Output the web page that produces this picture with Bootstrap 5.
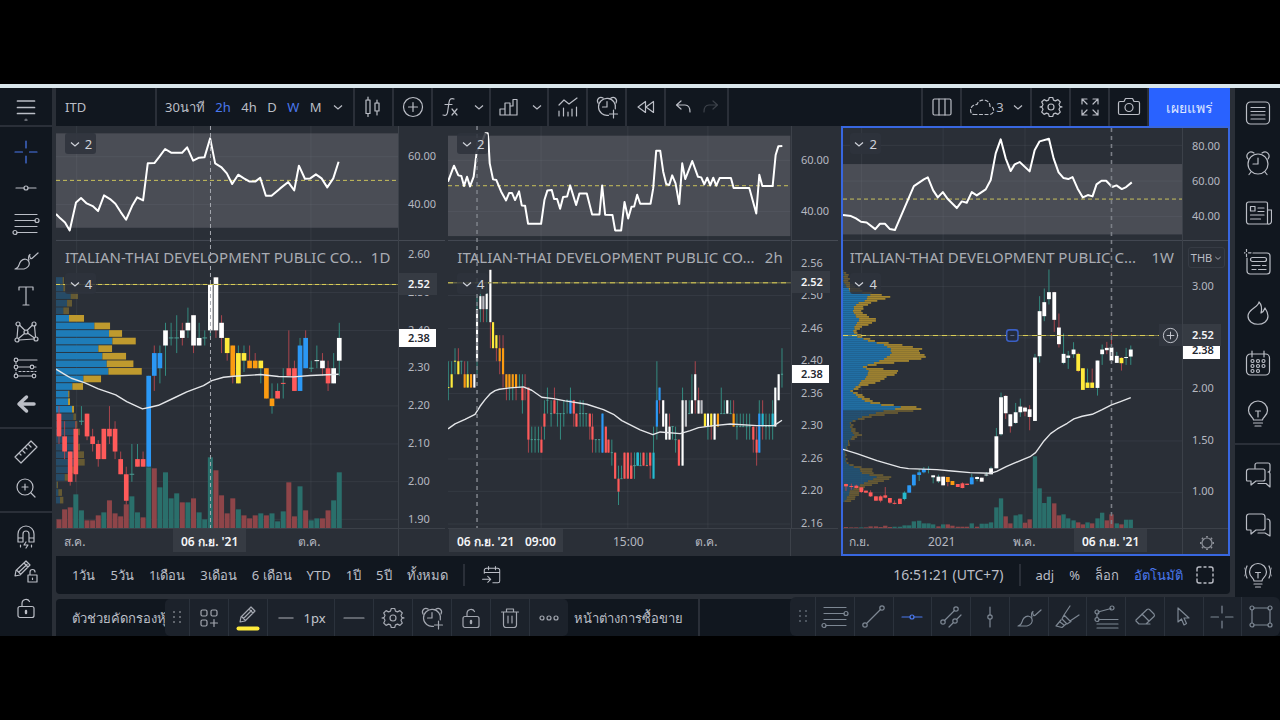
<!DOCTYPE html>
<html lang="th">
<head>
<meta charset="utf-8">
<meta name="viewport" content="width=device-width, initial-scale=1">
<title>ITD – Chart</title>
<link href="https://cdn.jsdelivr.net/npm/bootstrap@5.3.0/dist/css/bootstrap.min.css" rel="stylesheet">
<style>
:root{--panel:#11171f;--gap:#2a2f37;--float:#1c222b;--line:#2a2f38;--ink:#bbbec6;--blue:#4a78ee}
body{background:#000;color:var(--ink);font-family:"Noto Sans","Open Sans",sans-serif;font-size:13px;line-height:20px;padding:84px 0}
svg{display:block}
.ico{width:28px;height:28px;fill:none;stroke:currentColor;stroke-width:1.2;stroke-linecap:round;stroke-linejoin:round;flex:none}
.ico-sm{width:24px;height:24px}
.chev{width:12px;height:12px;fill:none;stroke:currentColor;stroke-width:1.2;flex:none}
.workspace{background:var(--gap);border-top:4px solid #d9e5ea;display:grid;grid-template-columns:52px minmax(0,1fr) 45px;column-gap:4px}
.center-col{padding-right:1px}
.tb{background:none;border:0;color:inherit;padding:0;display:flex;align-items:center;justify-content:center;white-space:nowrap}
.rail{background:var(--panel);height:0;min-height:100%;overflow:hidden}
.rail .tb{width:100%;height:36px;flex:none}
.rail .menu-tb{height:39px;border-bottom:2px solid var(--line);margin-bottom:7px}
.rail hr{margin:5px 0;border:0;border-top:2px solid var(--line);opacity:1;flex:none}
.side-rail .tb{height:50px}
.top-tools{background:var(--panel);height:38px}
.cell{border-right:2px solid var(--line);display:flex;align-items:center;justify-content:center;height:38px}
.w39{width:39px}.w58{width:58px}
.layout-btn{width:41px;border-left:2px solid var(--line)}
.saved-btn{width:70px}
.history{width:63px}
.symbol-btn{width:101px;justify-content:flex-start;padding-left:9px}
.interval{width:198px;padding:0 9px 0 8px;justify-content:space-between}
.on{color:var(--blue)}
.publish{background:#2962ff;color:#dfe6ff;width:81px;height:38px;border-radius:0;border:0;font-size:14px;padding:0;font-weight:500}
.charts{display:grid;grid-template-columns:repeat(3,minmax(0,1fr));gap:3px;height:430px}
.pane{display:grid;grid-template-columns:minmax(0,1fr) 47px;grid-template-rows:minmax(0,1fr) 28px;background:#2a2f37;position:relative}
.pane.active{border:2px solid #3867e0;grid-template-columns:minmax(0,1fr) 46px;grid-template-rows:minmax(0,1fr) 26px}
.pane svg.plot,.pane svg.axis,.pane svg.times{width:100%;height:100%;min-height:0;font-size:11px;fill:#b5b8c0}
.pane svg.times{font-size:12px}
.plot-wrap{position:relative;min-height:0}
.axis-wrap{border-left:1px solid #3c4149;min-height:0;position:relative}
.time-row{grid-column:1/3;border-top:1px solid #3c4149;min-height:0}
.legend-btn{position:absolute;left:9px;height:21px;width:31px;background:rgba(46,51,60,.85);border-radius:3px;font-size:13px;color:#d0d3da;gap:4px}
.top-legend{top:7px}.main-legend{top:147px}
.active .top-legend{top:5px;left:7px}.active .main-legend{top:145px;left:7px}
.pair{position:absolute;left:9px;right:8px;top:119px;font-size:15px;line-height:24px;color:#a9acb3;display:flex;justify-content:space-between;white-space:nowrap}
.active .pair{left:7px;top:117px}
.thb{position:absolute;left:5px;top:119px;width:37px;height:21px;border:1px solid #363b44;border-radius:3px;font-size:11px;gap:2px}
.thb .chev{width:8px;height:8px}
.add-alert{position:absolute;right:0;top:196px;width:23px;height:22px;background:#30353e;color:#d0d3da}
.add-alert .ico{width:21px;height:21px}
.range-bar{background:var(--panel);height:38px;border-radius:0 0 4px 4px;padding:0 11px 0 16px}
.range-bar .ranges{gap:15px}
.clock{font-size:14px}
.vr-line{width:2px;height:22px;background:var(--line)}
.tabs-bar{margin-top:5px;height:37px;background:var(--panel);border-radius:4px 4px 0 0;padding-left:16px;overflow:hidden}
.tab-a{width:93px;overflow:hidden;justify-content:flex-start;height:37px}
.tab-b{width:132px;border-right:2px solid var(--line);justify-content:flex-start;padding-left:6px;height:37px}
.floatbar{background:var(--float);border-radius:5px;color:#a3a7b0}
.floatbar .tb{height:37px;width:39px;border-left:1px solid #2b323c}
.floatbar .grip{width:24px;border:0}
.floatbar .thick{width:67px;gap:7px;color:#c4c7ce}
.floatbar .thick .ico{width:20px}
.draw-bar{position:absolute;right:0;bottom:0;width:490px;color:#7d8793;border-radius:6px}
.draw-bar .tb{height:39px;flex:1 1 0}
.draw-bar .grip{flex:none;width:25px}
</style>
</head>
<body>
<svg width="0" height="0" class="position-absolute" aria-hidden="true">
<defs>
<symbol id="menu" viewBox="0 0 28 28"><path d="M5.500 8h17M5.500 14.500h17M5.500 20.500h17" stroke-width="1.700"/><circle cx="14" cy="27" r="1.600" fill="currentColor" stroke="none" opacity=".5"/></symbol>
<symbol id="cross" viewBox="0 0 28 28"><path d="M14 3v7M14 18v7M3 14h7.500M17.500 14H25" /></symbol>
<symbol id="hline" viewBox="0 0 28 28"><circle cx="14" cy="14" r="2"/><path d="M4 14h8M16 14h8"/></symbol>
<symbol id="vline" viewBox="0 0 28 28"><circle cx="14" cy="14" r="2.200"/><path d="M14 4v7.800M14 16.200V24"/></symbol>
<symbol id="fib" viewBox="0 0 28 28"><path d="M3 4.500h22M3 10.500h20M3 16.500h22M5 22.500h20"/><circle cx="25" cy="10.500" r="2"/><circle cx="3" cy="22.500" r="2"/></symbol>
<symbol id="brush" viewBox="0 0 28 28"><path d="M3 23c5-1 3-5 6-8s7-2 8 1-1 6-5 7H3zM17 14c-1-3-1-4 1-5.500M26 7l-5 4.500c-2 2-3 1.500-3.500-2.500"/></symbol>
<symbol id="text" viewBox="0 0 28 28"><path d="M7 8V5h14v3M14 5v18M11 23h6"/></symbol>
<symbol id="xabcd" viewBox="0 0 28 28"><path d="M5 20 6 8M8 7.500l5 5M15 12.500l5-5M22.500 8l1 11M6.500 20.500l6-5M15.500 15l7 5M7 22l15-1"/><circle cx="6" cy="6" r="2"/><circle cx="22" cy="6" r="2"/><circle cx="14" cy="14" r="2"/><circle cx="5" cy="22" r="2"/><circle cx="24" cy="21" r="2"/></symbol>
<symbol id="forecast" viewBox="0 0 28 28"><path d="M6 6h19M6 13h12M6 22h14"/><path d="M4 8.500v3M4 15.500v4" stroke-dasharray="1 2"/><path d="M7 17.500h17M22 13h4" stroke-dasharray="2 2"/><circle cx="4" cy="6" r="1.800"/><circle cx="4" cy="13" r="1.800"/><circle cx="4" cy="22" r="1.800"/><circle cx="22" cy="22" r="1.800"/><circle cx="20" cy="13" r="1.800"/></symbol>
<symbol id="back" viewBox="0 0 28 28"><path d="M14.500 7 7 14l7.500 7M8 14h14" stroke-width="3.500"/></symbol>
<symbol id="ruler" viewBox="0 0 28 28"><path d="M3 19 19 3l6 6L9 25zM7 15l2 2M10 12l3 3M13 9l2 2M16 6l3 3"/></symbol>
<symbol id="zoomin" viewBox="0 0 28 28"><circle cx="13" cy="13" r="8"/><path d="M19 19l4 4M13 10v6M10 13h6"/></symbol>
<symbol id="magnet" viewBox="0 0 28 28"><path d="M6 20v-8a8 8 0 0 1 16 0v8h-5v-8a3 3 0 0 0-6 0v8zM6 16h5M17 16h5M8.500 23v2M19.500 23v2M14 20l-2 3h4l-2 3"/></symbol>
<symbol id="penlock" viewBox="0 0 28 28"><path d="M3 18l1-5.500L14 3l4 4-10 10zM12 5l4 4M5 12.500l3.500 3.500M7 14l8-7.500M16 17h9v7h-9zM18 17v-3a2.500 2.500 0 0 1 5 0M20.500 20v1.500"/></symbol>
<symbol id="unlock" viewBox="0 0 28 28"><rect x="6" y="12.500" width="16" height="11" rx="2"/><path d="M10 12V9a4 4 0 0 1 7.500-1.500"/><path d="M14 17v2" stroke-width="2.400"/></symbol>
<symbol id="eye" viewBox="0 0 28 28"><path d="M6 13c3-8 13-8 16 0-3 8-13 8-16 0z"/></symbol>
<symbol id="candles" viewBox="0 0 28 28"><path d="M8 4v3M8 20.500v3M17 7v3M17 18v4"/><path d="M6 7h4v13.500H6zM15 10h4v8h-4z"/></symbol>
<symbol id="plus" viewBox="0 0 28 28"><circle cx="14" cy="14" r="9.500"/><path d="M14 9.500v9M9.500 14h9"/></symbol>
<symbol id="fx" viewBox="0 0 28 28"><path d="M6 22c3 .8 4 0 4.500-2.500l1.500-10c.5-3.500 2-4.500 5-3.500M8 11.500h7M15 16l5 6M20 16l-5 6"/></symbol>
<symbol id="bars" viewBox="0 0 28 28"><path d="M5 16h5v6H5zM10 10h5v12h-5zM15 13h3M18 6.500h4V22h-7v-9h3z"/></symbol>
<symbol id="tmpl" viewBox="0 0 28 28"><path d="M5 12l5-5 5 4 8-6M5 18v5M9.500 15v8M14 19v4M18 16v7M22.500 14v9"/></symbol>
<symbol id="alarmadd" viewBox="0 0 28 28"><path d="M15.500 22.300a8.500 8.500 0 1 1 6.800-6.500M14 8.500V14H9.500M5 10C3 6 7 3 10 5M18 5c3-2 7 1 5 5M20.500 17v8M16.500 21h8"/></symbol>
<symbol id="rewind" viewBox="0 0 28 28"><path d="M13.500 8.500v11L6 14zM21.500 8.500v11L14 14z"/></symbol>
<symbol id="undo" viewBox="0 0 28 28"><path d="M8 12h8c4 0 5 3 5 7M12 8l-4.500 4L12 16"/></symbol>
<symbol id="redo" viewBox="0 0 28 28"><path d="M20 12h-8c-4 0-5 3-5 7M16 8l4.500 4L16 16"/></symbol>
<symbol id="layout" viewBox="0 0 28 28"><rect x="5" y="6" width="18" height="16" rx="1.500"/><path d="M11 6v16M17 6v16"/></symbol>
<symbol id="cloud" viewBox="0 0 28 28"><path d="M6 21.500h15c6 0 6-8 1-8 0-8-11-8.500-13-2-8 0-8 10-3 10z" stroke-dasharray="3 2.500"/></symbol>
<symbol id="gear" viewBox="0 0 28 28"><circle cx="14" cy="14" r="3"/><path d="M12.300 4.500h3.400l.8 2.600 2 .8 2.400-1.300 2.400 2.400-1.300 2.400.8 2 2 .5.200.1v0l-2.200.5-.8 2 1.300 2.500-2.400 2.400-2.400-1.300-2 .8-.8 2.600h-3.400l-.8-2.600-2-.8-2.400 1.300-2.400-2.400L6 16.500l-.8-2L3 14l2.200-.6.8-2L4.700 9l2.400-2.400 2.400 1.300 2-.8z"/></symbol>
<symbol id="expand" viewBox="0 0 28 28"><path d="M6 11V6h5M17 6h5v5M22 17v5h-5M11 22H6v-5M6 6l5 5M22 6l-5 5M22 22l-5-5M6 22l5-5"/></symbol>
<symbol id="camera" viewBox="0 0 28 28"><path d="M5 8.500h4l1.500-3h7l1.500 3h4a1.500 1.500 0 0 1 1.500 1.500v10a1.500 1.500 0 0 1-1.500 1.500H5A1.500 1.500 0 0 1 3.500 20V10A1.500 1.500 0 0 1 5 8.500z"/><circle cx="14" cy="14.500" r="4"/></symbol>
<symbol id="chev" viewBox="0 0 12 12"><path d="M2 4.500l4 3.500 4-3.500"/></symbol>
<symbol id="list" viewBox="0 0 28 28"><rect x="2.500" y="3" width="23" height="22" rx="4"/><path d="M7 8.500h14M7 12.500h14M7 16h14M7 20h14"/></symbol>
<symbol id="alarm" viewBox="0 0 28 28"><circle cx="14" cy="15" r="10"/><path d="M14 9v6H9M4 10C1 6 5 1 10 4M24 10c3-4-1-9-6-6M7 23l-2 2.500M21 23l2 2.500"/></symbol>
<symbol id="news" viewBox="0 0 28 28"><path d="M23.500 25H5a2.500 2.500 0 0 1-2.500-2.500V5A2 2 0 0 1 4.500 3H22a1.500 1.500 0 0 1 1.500 1.500V25c2.500.5 4-1 4-3V11h-4M14 9h6M14 12.500h6M6.500 16h13.500M6.500 20h10"/><rect x="6.500" y="7.500" width="4.500" height="4.500"/></symbol>
<symbol id="datawin" viewBox="0 0 28 28"><path d="M9 4h14a3 3 0 0 1 3 3v15a3 3 0 0 1-3 3H6a3 3 0 0 1-3-3V9M2.500 0v2.500M2.500 5v2.500M0 3.800h1M4.500 3.800H7M8 16.500h8M18.500 16.500h3.500M8 20.500h4M14.500 20.500h7.500"/><rect x="6.500" y="8.500" width="16" height="4" rx="2"/></symbol>
<symbol id="flame" viewBox="0 0 28 28"><path d="M15 3c0 5-11 7-11 14 0 11 20 11 20 0 0-3-1-5-3-8-1 3-2 4-4 5 1-4 1-8-2-11z"/></symbol>
<symbol id="cal" viewBox="0 0 28 28"><rect x="2.500" y="5" width="23" height="21" rx="4"/><path d="M8 2v6M20 2v6"/><circle cx="8.500" cy="12" r="1.500"/><circle cx="14" cy="12" r="1.500"/><circle cx="19.500" cy="12" r="1.500"/><circle cx="8.500" cy="17" r="1.500"/><circle cx="14" cy="17" r="1.500"/><circle cx="19.500" cy="17" r="1.500"/><circle cx="8.500" cy="22" r="1.500"/><circle cx="14" cy="22" r="1.500"/></symbol>
<symbol id="bulb" viewBox="0 0 28 28"><path d="M9.500 21c0-3-5-4-5-9.500a9.500 9.500 0 0 1 19 0c0 5.500-5 6.500-5 9.500zM11.500 12h5M14 12v6M9.500 24h9M11 27h6"/></symbol>
<symbol id="chats" viewBox="0 0 28 28"><path d="M11 7V4a2 2 0 0 1 2-2h11a2 2 0 0 1 2 2v5a2 2 0 0 1-2 2M5 8h14a2 2 0 0 1 2 2v8a2 2 0 0 1-2 2h-7l-5 4v-4H3.500a1 1 0 0 1-1-1v-8.500A2.500 2.500 0 0 1 5 8zM24 11a2 2 0 0 1 2 2v13l-4-3.500h-8"/></symbol>
<symbol id="chat" viewBox="0 0 28 28"><path d="M5 3h13a3 3 0 0 1 3 3v11a2 2 0 0 1-2 2h-7l-5 4v-4H3.500a1 1 0 0 1-1-1V5.500A2.500 2.500 0 0 1 5 3zM23 8a3 3 0 0 1 3 3v14l-5-3h-7"/></symbol>
<symbol id="bulbwave" viewBox="0 0 28 28"><path d="M10 20c0-3-4.500-4-4.500-9a8.500 8.500 0 0 1 17 0c0 5-4.500 6-4.500 9zM11.500 11.500h5M14 11.500v5.500M10 23h8M11.500 26h5M3 5c-2 4-2 8 0 12M0 7c-1 3-1 5 0 8M25 5c2 4 2 8 0 12M28 7c1 3 1 5 0 8" /></symbol>
<symbol id="goto" viewBox="0 0 28 28"><path d="M5 12V8.500A2.500 2.500 0 0 1 7.500 6h13A2.500 2.500 0 0 1 23 8.500V21a2 2 0 0 1-2 2h-6M5 11h18M10 4v4M18 4v4M3 19h9M9 15.500l3.500 3.500L9 22.500"/></symbol>
<symbol id="full" viewBox="0 0 28 28"><path d="M6 10V8a2 2 0 0 1 2-2h2M18 6h2a2 2 0 0 1 2 2v2M22 18v2a2 2 0 0 1-2 2h-2M10 22H8a2 2 0 0 1-2-2v-2M13 6h2M13 22h2M6 13v2M22 13v2" stroke-width="1.400"/></symbol>
<symbol id="grip" viewBox="0 0 28 28"><path d="M10 7h2v2h-2zM16 7h2v2h-2zM10 12h2v2h-2zM16 12h2v2h-2zM10 17h2v2h-2zM16 17h2v2h-2z" fill="currentColor" stroke="none" opacity=".5"/></symbol>
<symbol id="widgets" viewBox="0 0 28 28"><rect x="6" y="6" width="6" height="6" rx="1.500"/><rect x="16" y="6" width="6" height="6" rx="1.500"/><rect x="6" y="16" width="6" height="6" rx="1.500"/><path d="M19 15.500v7M15.500 19h7"/></symbol>
<symbol id="pencil" viewBox="0 0 28 28"><path d="M6 18l1-5L17 3l4 4L11 17zM15 5l4 4M8 13l3 3M9.500 14.500l8-8"/><path d="M4.500 24.500h19" stroke="#ffeb3b" stroke-width="4"/></symbol>
<symbol id="dash" viewBox="0 0 28 28"><path d="M4 14h20"/></symbol>
<symbol id="trash" viewBox="0 0 28 28"><path d="M5.500 8h17M10.500 8V5h7v3M7.500 8v13a2.500 2.500 0 0 0 2.500 2.500h8a2.500 2.500 0 0 0 2.500-2.500V8M12 12v7M16 12v7"/></symbol>
<symbol id="dots" viewBox="0 0 28 28"><circle cx="7" cy="14" r="2"/><circle cx="14" cy="14" r="2"/><circle cx="21" cy="14" r="2"/></symbol>
<symbol id="trend" viewBox="0 0 28 28"><circle cx="5" cy="22" r="2.200"/><circle cx="22" cy="5" r="2.200"/><path d="M7 20 20.500 6.500"/></symbol>
<symbol id="channel" viewBox="0 0 28 28"><circle cx="6" cy="19" r="2.200"/><circle cx="19" cy="6" r="2.200"/><circle cx="18" cy="18" r="2.200"/><path d="M7.500 17.500l10-10M20 16l4-4M16 20l-4 4"/></symbol>
<symbol id="marker" viewBox="0 0 28 28"><path d="M17 3l-6 9 6 6 9-6M11 12l-2 4 5 5 4-2.500M8 17l-5 6 6 1.500 4-3.500M7 19l4 3"/></symbol>
<symbol id="fan" viewBox="0 0 28 28"><path d="M6 9l13-3.500M5 11v4M7 16.500h19M5 21h21M5 25h21"/><circle cx="5" cy="9" r="2"/><circle cx="5" cy="16.500" r="2"/><circle cx="20" cy="5" r="2"/></symbol>
<symbol id="eraser" viewBox="0 0 28 28"><path d="M5 17 16 6.500a2 2 0 0 1 2.500 0L23 11a2 2 0 0 1 0 2.500L15 21H8l-3-3zM11 11l7 7M8 21h11"/></symbol>
<symbol id="cursor" viewBox="0 0 28 28"><path d="M8 5v14l3.500-3 2.500 6 2.500-1.500-2.500-5.500H19z"/></symbol>
<symbol id="rect" viewBox="0 0 28 28"><circle cx="5" cy="5" r="2"/><circle cx="23" cy="5" r="2"/><circle cx="5" cy="22" r="2"/><circle cx="23" cy="22" r="2"/><path d="M7 5h14M7 22h14M5 7v13M23 7v13"/></symbol>
<symbol id="sun" viewBox="0 0 28 28"><circle cx="14" cy="14" r="5"/><path d="M14 7v1.500M14 19.500V21M7 14h1.500M19.500 14H21M9 9l1 1M18 18l1 1M19 9l-1 1M10 18l-1 1" stroke-width="1.800"/></symbol>
</defs>
</svg>

<main class="workspace position-relative">
  <nav class="rail d-flex flex-column" aria-label="Drawing tools" data-icons="menu cross hline fib brush text xabcd forecast back - ruler zoomin - magnet penlock unlock eye"></nav>

  <div class="center-col d-flex flex-column">
    <header class="top-tools d-flex">
      <button class="tb cell symbol-btn">ITD</button>
      <div class="cell interval">
        <button class="tb">30นาที</button><button class="tb on">2h</button><button class="tb">4h</button><button class="tb">D</button><button class="tb on">W</button><button class="tb">M</button>
        <button class="tb" aria-label="More intervals"><svg class="chev"><use href="#chev"/></svg></button>
      </div>
      <button class="tb cell w39" aria-label="Candles"><svg class="ico"><use href="#candles"/></svg></button>
      <button class="tb cell w39" aria-label="Compare"><svg class="ico"><use href="#plus"/></svg></button>
      <button class="tb cell w58 gap-2" aria-label="Indicators"><svg class="ico"><use href="#fx"/></svg><svg class="chev"><use href="#chev"/></svg></button>
      <button class="tb cell w58 gap-2" aria-label="Financials"><svg class="ico"><use href="#bars"/></svg><svg class="chev"><use href="#chev"/></svg></button>
      <button class="tb cell w39" aria-label="Templates"><svg class="ico"><use href="#tmpl"/></svg></button>
      <button class="tb cell w39" aria-label="Alert"><svg class="ico"><use href="#alarmadd"/></svg></button>
      <button class="tb cell w39" aria-label="Replay"><svg class="ico"><use href="#rewind"/></svg></button>
      <div class="cell history"><button class="tb" aria-label="Undo"><svg class="ico"><use href="#undo"/></svg></button><button class="tb opacity-25" aria-label="Redo"><svg class="ico"><use href="#redo"/></svg></button></div>
      <div class="d-flex ms-auto">
        <button class="tb cell layout-btn" aria-label="Layout"><svg class="ico"><use href="#layout"/></svg></button>
        <button class="tb cell saved-btn" aria-label="Saved layouts"><svg class="ico"><use href="#cloud"/></svg><span class="me-2">3</span><svg class="chev"><use href="#chev"/></svg></button>
        <button class="tb cell w39" aria-label="Settings"><svg class="ico"><use href="#gear"/></svg></button>
        <button class="tb cell w39" aria-label="Fullscreen"><svg class="ico"><use href="#expand"/></svg></button>
        <button class="tb cell w39" aria-label="Snapshot"><svg class="ico"><use href="#camera"/></svg></button>
        <button class="btn publish">เผยแพร่</button>
      </div>
    </header>

    <section class="charts">
      <article class="pane" id="c1">
        <div class="plot-wrap"><svg class="plot" viewBox="168 378 1026 1206" preserveAspectRatio="none"></svg>
          <button class="tb legend-btn top-legend"><svg class="chev"><use href="#chev"/></svg>2</button>
          <div class="pair"><span>ITALIAN-THAI DEVELOPMENT PUBLIC CO...</span><span>1D</span></div>
          <button class="tb legend-btn main-legend"><svg class="chev"><use href="#chev"/></svg>4</button></div>
        <div class="axis-wrap"><svg class="axis"></svg></div>
        <div class="time-row"><svg class="times"></svg></div>
      </article>
      <article class="pane" id="c2">
        <div class="plot-wrap"><svg class="plot" viewBox="1344 378 1026 1206" preserveAspectRatio="none"></svg>
          <button class="tb legend-btn top-legend"><svg class="chev"><use href="#chev"/></svg>2</button>
          <div class="pair"><span>ITALIAN-THAI DEVELOPMENT PUBLIC CO...</span><span>2h</span></div>
          <button class="tb legend-btn main-legend"><svg class="chev"><use href="#chev"/></svg>4</button></div>
        <div class="axis-wrap"><svg class="axis"></svg></div>
        <div class="time-row"><svg class="times"></svg></div>
      </article>
      <article class="pane active" id="c3">
        <div class="plot-wrap"><svg class="plot" viewBox="2526 384 1020 1200" preserveAspectRatio="none"></svg>
          <button class="tb legend-btn top-legend"><svg class="chev"><use href="#chev"/></svg>2</button>
          <div class="pair"><span>ITALIAN-THAI DEVELOPMENT PUBLIC C...</span><span>1W</span></div>
          <button class="tb legend-btn main-legend"><svg class="chev"><use href="#chev"/></svg>4</button>
          <button class="tb add-alert" aria-label="Add alert at price"><svg class="ico"><use href="#plus"/></svg></button></div>
        <div class="axis-wrap"><svg class="axis"></svg><button class="tb thb">THB<svg class="chev"><use href="#chev"/></svg></button></div>
        <div class="time-row"><svg class="times"></svg></div>
      </article>
    </section>

    <section class="range-bar d-flex align-items-center">
      <div class="ranges d-flex align-items-center">
        <button class="tb">1วัน</button><button class="tb">5วัน</button><button class="tb">1เดือน</button><button class="tb">3เดือน</button><button class="tb">6 เดือน</button><button class="tb">YTD</button><button class="tb">1ปี</button><button class="tb">5ปี</button><button class="tb">ทั้งหมด</button>
        <span class="vr-line"></span>
        <button class="tb" aria-label="Go to date"><svg class="ico ico-sm"><use href="#goto"/></svg></button>
      </div>
      <div class="ranges d-flex align-items-center ms-auto">
        <button class="tb clock">16:51:21 (UTC+7)</button><span class="vr-line"></span>
        <button class="tb">adj</button><button class="tb">%</button><button class="tb">ล็อก</button><button class="tb on">อัตโนมัติ</button>
      </div>
      <button class="tb ms-2" aria-label="Maximize"><svg class="ico"><use href="#full"/></svg></button>
    </section>

    <section class="tabs-bar d-flex">
      <button class="tb tab-a">ตัวช่วยคัดกรองหุ้น</button>
      <div class="floatbar d-flex">
        <button class="tb grip" aria-label="Move"><svg class="ico"><use href="#grip"/></svg></button>
        <button class="tb" aria-label="Templates"><svg class="ico"><use href="#widgets"/></svg></button>
        <button class="tb" aria-label="Line color"><svg class="ico"><use href="#pencil"/></svg></button>
        <button class="tb thick"><svg class="ico"><use href="#dash"/></svg>1px</button>
        <button class="tb" aria-label="Line style"><svg class="ico"><use href="#dash"/></svg></button>
        <button class="tb" aria-label="Settings"><svg class="ico"><use href="#gear"/></svg></button>
        <button class="tb" aria-label="Add alert"><svg class="ico"><use href="#alarmadd"/></svg></button>
        <button class="tb" aria-label="Lock"><svg class="ico"><use href="#unlock"/></svg></button>
        <button class="tb" aria-label="Remove"><svg class="ico"><use href="#trash"/></svg></button>
        <button class="tb" aria-label="More"><svg class="ico"><use href="#dots"/></svg></button>
      </div>
      <button class="tb tab-b">หน้าต่างการซื้อขาย</button>
    </section>
  </div>

  <nav class="rail side-rail d-flex flex-column" aria-label="Widgets" data-icons="list alarm news datawin flame cal bulb - chats chat bulbwave"></nav>

  <div class="floatbar draw-bar d-flex" role="toolbar" aria-label="Favorite drawing tools" data-icons="grip fib trend hline channel vline brush marker fan eraser cursor cross rect"></div>
</main>

<script src="https://cdn.jsdelivr.net/npm/bootstrap@5.3.0/dist/js/bootstrap.bundle.min.js"></script>
<script>
// Toolbars built from their icon lists; "-" is a separator.
document.querySelectorAll('[data-icons]').forEach(bar => {
  bar.innerHTML = bar.dataset.icons.split(' ').map(n => {
    if (n === '-') return '<hr>';
    const on = (bar.classList.contains('draw-bar') ? 'hline' : bar.classList.contains('side-rail') ? '' : 'cross') === n;
    return `<button class="tb ${on ? 'on' : ''} ${n === 'grip' ? 'grip' : ''} ${n === 'menu' ? 'menu-tb' : ''}" aria-label="${n}"><svg class="ico overflow-visible"><use href="#${n}"/></svg></button>`;
  }).join('');
});

// Plot units are thirds of a CSS pixel.
const COL = {R:'#ff5a5a', B:'#2b98f5', W:'#fff', Y:'#ffea3b', O:'#fb9b11', C:'#26b9cf', G:'#2f7a74', A:'#b9bcc2'};
const WICK = {g:'#348a7f', r:'#a9454d'};
const rect = (x, y, w, h, f, o = 1) => `<rect x="${x}" y="${y}" width="${w}" height="${h}" fill="${f}" opacity="${o}"/>`;
const seg = (x1, y1, x2, y2, s, w = 1, d = '', o = 1) => `<path d="M${x1} ${y1}L${x2} ${y2}" stroke="${s}" stroke-width="${w}" stroke-dasharray="${d}" opacity="${o}" fill="none" vector-effect="non-scaling-stroke"/>`;
const line = (pts, dx, dy, w) => `<polyline points="${pts.trim().split(/\s+/).map(p => { const [a, b] = p.split(','); return (+a + dx) + ',' + (+b + dy); }).join(' ')}" fill="none" stroke="${w < 2 ? '#e4e6e9' : '#fff'}" stroke-width="${w}" stroke-linejoin="round" vector-effect="non-scaling-stroke"/>`;
function candle(x, h, t, b, l, c, wk, w) {
  const flat = b - t < 3;
  return rect(x - 1.5, h, 3, Math.max(l - h, 0), WICK[wk]) + rect(x - w / 2, flat ? t - 1.5 : t, w, flat ? 3 : b - t, flat && c === 'G' ? '#4d9c93' : COL[c]);
}
function frame(o) {
  let s = rect(o.x0, o.band[0], o.x1 - o.x0, o.band[1] - o.band[0], '#4a4d55');
  o.gv.forEach(x => s += seg(x, 378, x, 1584, '#8a909b', 1, '', .11));
  o.gh.forEach(y => s += seg(o.x0, y, o.x1, y, '#8a909b', 1, '', .11));
  s += seg(o.x0, 721, o.x1, 721, '#454a53');
  s += seg(o.x0, o.mid, o.x1, o.mid, '#c9c15c', 1, '4 3');
  return s;
}
const put = (id, s) => document.querySelector('#' + id + ' .plot').innerHTML = s;

// ---- Daily ----
{
  let s = frame({x0:168, x1:1194, band:[400,683], gv:[230,580,932], gh:[470,613,877,991,1104,1217,1331,1444,1557], mid:541});
  const prof = '38,42 40,47 62,84 51,66 40,57 57,102 133,180 177,216 187,257 145,186 157,228 170,250 175,275 100,153 67,99 55,58 54,60 66,72 70,78 76,82 80,90 74,85 78,90 82,102 82,104 58,80 44,56 20,24 25,36 30,40'.split(' ');
  prof.forEach((p, i) => { const [a, b] = p.split(',').map(Number), y = 831 + i * 22.7, o = i < 5 || i > 17 ? .4 : 1;
    s += rect(168, y, a - 18, 20, i < 5 || i > 17 ? '#2176ae' : '#1e7cb8', o) + rect(150 + a, y, b - a, 20, '#bf9a2e', o); });
  const vol = '9r 19r 21r 34g 18g 8r 8r 13r 16g 28r 15r 12r 24r 32g 16g 11r 61g 60r 41g 56g 30g 35g 26r 26g 30r 16g 9g 71g 58r 33r 15r 30r 19g 13r 10r 13r 15g 13r 15g 7g 17g 46r 12r 42g 18r 8g 10g 10r 18r 28g 56g'.split(' ');
  const X = i => 177 + i * 16.8;
  vol.forEach((v, i) => { const h = parseInt(v) * 3; s += rect(X(i) - 7.5, 1584 - h, 15, h, v.endsWith('g') ? '#2a6f6b' : '#8e4549'); });
  const c = `220 218 212 210 R r,216 212 208 206 R r,208 208 200 199 R r,216 214 202 200 R r,220 216 216 215 G g,218 218 212 211 R r,214 212 210 208 R r,211 210 206 204 R r,214 214 206 206 R r,220 214 212 210 R r,216 214 208 206 R r,208 206 202 202 R r,204 202 195 194 R r,210 202 202 200 G g,210 206 204 204 R g,208 206 204 204 R r,228 228 204 204 B g,236 234 228 224 B r,236 234 230 226 B g,242 240 236 228 W g,242 238 238 236 G g,244 238 238 234 G g,242 240 238 236 W r,246 242 240 238 W g,244 244 236 234 W r,242 238 236 236 W g,240 238 238 236 G g,252 252 240 238 W g,254 254 240 238 W r,244 242 238 234 W r,238 238 234 232 Y r,236 236 228 226 O r,236 234 226 226 Y g,236 234 232 229 Y g,236 232 230 230 O r,234 232 230 230 O r,232 232 230 226 Y g,230 230 222 222 O r,226 222 220 218 O g,226 224 222 222 R g,230 226 226 222 R g,240 230 228 228 R r,232 230 224 224 R r,238 236 224 224 B g,240 238 230 230 B r,232 230 230 229 G g,236 232 232 230 W g,234 232 230 228 W r,232 230 226 224 R r,234 230 226 226 W g,242 238 232 228 W g`.split(',');
  const Y = p => 877 + (250 - p) * 11.35;
  c.forEach((k, i) => { const [h, t, b, l, col, w] = k.trim().split(' '); s += candle(X(i), Y(h), Y(t), Y(b), Y(l), col, w, 14); });
  s += line('18,387 45,403 64,414 105,428 145,446 180,458 197,464 230,484 277,506 300,501 325,495 370,474 410,455 460,436 485,421 520,411 550,408 630,403 685,409 730,410 780,406 865,402', 150, 720, 1.4);
  s += seg(168, 853, 1194, 853, '#7f7c4d') + seg(168, 853, 1194, 853, '#dccf58', 1, '4 3');
  s += line('168,402 180,414 195,427 209,451 228,367 243,354 260,370 278,378 294,393 312,346 330,357 346,371 362,396 378,419 396,378 411,352 429,361 443,250 463,249 478,230 495,207 513,218 546,218 561,202 579,242 597,233 613,232 630,175 645,250 663,261 680,280 696,312 714,284 730,294 747,304 766,304 780,293 797,347 814,347 840,325 864,306 882,331 896,257 914,296 930,295 947,283 964,295 981,322 999,295 1015,245', 0, 240, 2);
  s += seg(631, 378, 631, 1584, '#a6a9b0', 1, '4 3');
  put('c1', s);
}
// ---- Two hours ----
{
  let s = frame({x0:1344, x1:2370, band:[407,708], gv:[1623,1883,2123], gh:[481,634,886,985,1083,1180,1277,1376,1473,1571], mid:557});
  const a = `25 363 442 442 480 Y g,35 363 402 442 442 Y g,45 324 363 363 402 Y g,55 324 363 402 402 Y r,64 363 363 363 402 G g,74 363 402 442 442 O r,83 363 402 442 442 Y g,93 402 402 442 442 O r,103 402 402 442 442 W r,111 168 207 363 402 W g,121 150 168 207 246 W g,130 168 168 207 246 A r,140 130 160 207 246 W g,151 89 89 246 324 W r,159 246 246 324 324 Y r,169 285 285 324 363 Y r,179 285 324 363 402 O r,189 285 324 402 442 O r,199 402 402 442 480 O r,208 402 402 442 480 O g,218 402 402 442 480 O g,228 402 402 442 480 O r,238 402 442 442 442 G g,247 402 442 480 520 R g,255 402 442 442 480 R r,265 442 442 598 637 R r,275 559 598 598 637 G g,285 559 598 598 637 G g,295 559 598 598 637 G g,304 559 598 637 637 R r,313 480 520 559 598 R g,322 442 480 480 520 G g,333 480 520 520 559 G g,343 442 480 520 520 R r,352 480 520 520 559 G g,361 520 520 520 598 G g,371 480 520 520 559 G g,381 480 480 480 520 G g,391 442 480 520 520 B g,401 480 480 520 559 R r,409 520 520 559 559 R r,420 480 520 520 559 G g,429 480 520 520 559 G g,438 520 520 520 559 G g,449 520 520 559 598 R r,457 520 559 598 637 R r,467 598 598 598 637 G g,477 598 598 598 637 G g,487 520 520 637 637 B g,497 559 559 637 637 R r,505 598 598 637 637 R r,515 598 637 637 676 G g,525 637 637 715 715 R r,535 676 715 754 794 R g,544 676 715 715 715 G g,553 637 637 715 715 R r,563 637 637 715 715 R r,573 637 676 715 715 R r,583 637 676 676 715 G g,593 637 637 676 676 C g`;
  const b = `3 637 676 715 715 R r,13 637 676 676 715 G g,22 637 637 676 676 C g,31 637 676 676 676 G g,40 637 637 676 676 R r,50 637 676 676 676 R g,60 637 637 676 715 R r,70 559 637 715 715 C g,80 363 480 559 598 B g,88 442 442 480 520 B r,99 480 480 559 559 W r,108 520 520 598 598 W g,118 520 559 598 598 W r,127 559 559 559 598 G g,136 559 598 598 637 G g,146 598 598 676 676 R r,157 442 480 676 676 W g,167 480 480 559 559 A r,177 480 520 520 520 G g,185 402 480 520 520 W g,195 363 402 480 520 W r,205 442 480 520 520 W r,214 480 480 520 520 A r,224 520 520 559 559 Y r,233 520 520 559 598 W g,243 520 520 559 598 Y r,253 520 520 598 598 W g,263 520 520 559 559 O g,273 442 520 520 520 G g,282 480 520 520 520 G g,291 480 480 520 520 W g,301 480 520 520 520 G g,310 480 520 559 559 O r,320 520 559 559 598 G g,330 520 559 559 559 G g,339 520 559 559 559 G g,349 520 559 559 598 G g,358 520 559 559 598 G g,369 559 559 598 637 R r,379 559 598 637 676 R r,387 480 520 637 637 B g,397 480 520 559 598 C r,407 520 559 559 598 G g,417 520 559 559 598 G g,427 480 520 559 598 C g,435 442 442 559 559 W g,445 402 402 480 480 W g,455 324 402 402 442 G g`;
  [[a, 1320], [b, 1890]].forEach(([d, dx]) => d.split(',').forEach(k => {
    const [x, h, t, bo, l, col, w] = k.split(' ').map((v, i) => i < 5 ? +v : v);
    s += candle(x + dx, h + 720, t + 720, bo + 720, l + 720, col, w, 6.5); }));
  s += line('24,566 45,551 75,537 105,522 120,498 135,478 150,461 165,451 178,447 210,443 250,440 275,450 305,471 340,475 375,482 440,492 490,508 520,522 545,541 600,569 638,583 660,575 720,580 750,571 775,562 820,556 870,551 950,556 1000,556 1010,550 1025,540', 1320, 720, 1.4);
  s += seg(1344, 848, 2370, 848, '#7f7c4d') + seg(1344, 848, 2370, 848, '#dccf58', 1, '5 4');
  s += line('84,305 102,257 115,286 124,288 132,318 141,290 150,319 161,290 170,215 176,205 184,190 196,160 203,160 205,180 209,250 219,298 229,300 243,334 258,361 267,339 276,339 285,360 297,334 305,376 315,377 324,431 363,431 373,360 382,331 395,330 402,357 411,357 420,386 429,351 441,349 450,316 468,375 478,340 500,340 516,403 538,403 546,316 555,404 577,405 585,451 603,451 613,366 624,415 634,380 642,379 651,344 660,371 691,371 699,325 708,212 720,212 729,275 738,312 747,315 756,286 766,310 777,372 786,250 795,297 816,243 833,290 843,292 852,313 861,293 870,316 879,293 888,317 898,294 932,294 940,324 987,324 1008,400 1017,284 1026,318 1057,318 1066,225 1074,199 1086,198', 1260, 240, 2);
  s += seg(1431, 378, 1431, 1584, '#7b7f87', 1.6, '4 4');
  put('c2', s);
}
// ---- Weekly ----
{
  let s = frame({x0:2526, x1:3546, band:[492,703], gv:[2582,2827,3073], gh:[436,543,649,859,1013,1168,1322,1477], mid:597});
  const keys = '90,20,24 110,20,36 130,22,40 150,40,80 160,100,120 168,92,162 180,85,125 188,58,95 200,50,78 215,50,76 225,55,90 238,70,126 250,55,95 262,52,68 275,50,60 288,62,78 300,95,118 310,135,180 322,160,255 335,165,248 350,148,272 362,125,210 372,90,115 380,75,85 388,98,190 400,90,175 410,88,145 422,72,132 435,60,78 450,42,52 465,58,78 478,80,105 490,110,142 499,203,253 508,150,250 520,100,150 530,70,95 545,38,42 560,40,50 583,50,72 600,35,40 615,30,34 640,22,24 670,30,36 685,70,110 697,75,110 708,120,165 720,95,145 735,60,90 750,40,70 765,32,60 785,22,42'.split(' ').map(k => k.split(',').map(Number));
  for (let y = 90, n = 0; y < 785; y += 6, n++) {
    let i = keys.findIndex(k => k[0] > y); const p = keys[i - 1], q = keys[i], f = (y - p[0]) / (q[0] - p[0]);
    const j = (n * 7 % 5 - 2) * 2, a = Math.max(1, p[1] + (q[1] - p[1]) * f - 18 + j / 2), b = Math.max(a, p[2] + (q[2] - p[2]) * f - 18 + j);
    const dim = y < 140 || y > 504, o = dim ? .45 : 1;
    s += rect(2526, y + 720, a, 6, '#1f567f', o) + rect(2526, y + 720, a, 3.6, '#2279b3', o) + rect(2526 + a, y + 720, b - a, 4.4, '#bd982f', dim ? .5 : 1);
  }
  const va = '27 860r,43 861r,58 861r,73 861g,87 861r,101 858r,117 858r,131 860r,145 856r,159 860r,173 859g,189 859g,203 855g,217 855g,231 843g,247 841g,261 849g,275 849g,289 852g,305 858r,319 852g,333 852r,347 856r,363 859r,377 859r,391 859r,405 849g,421 859r,435 850g,449 850g,463 846g,479 801g,493 774g,507 828r,521 849r,537 825g,551 822g,565 847r,579 837r,595 648g';
  const vb = '27 744g,41 788g,55 769g,71 789r,85 825r,99 822g,113 834g,129 840g,143 846r,157 852r,171 846g,185 849r,201 834g,215 817g,229 840r,243 822r,259 849g,273 852r,287 838g,301 838g';
  [[va, 2508], [vb, 3090]].forEach(([d, dx]) => d.split(',').forEach(k => { const [x, v] = k.split(' '), y = parseInt(v); s += rect(+x + dx - 6.5, y + 720, 13, 864 - y, v.endsWith('g') ? '#2a6f6b' : '#8e4549'); }));
  const a = `27 730 731 738 752 R r,43 730 737 740 748 R r,58 733 736 743 745 R r,73 741 741 755 758 R r,87 751 751 757 757 R r,101 750 756 768 770 R r,117 768 768 781 781 R r,131 765 768 781 786 R r,145 740 765 772 774 R r,159 773 773 787 790 R r,173 780 789 791 792 R r,189 775 775 791 791 R r,203 753 757 776 780 C g,217 735 735 757 757 B g,231 703 703 735 738 B g,247 686 696 704 722 B g,261 680 686 696 699 B g,275 678 687 689 699 B g,289 705 705 711 729 W g,305 703 709 723 728 W g,319 709 709 735 735 W r,333 710 710 725 738 O r,347 722 722 734 734 O r,363 731 731 740 740 R r,377 726 729 743 744 R r,391 730 730 734 734 R r,405 700 711 732 732 B g,421 708 710 716 723 W g,435 712 712 724 724 W r,449 695 704 706 708 W g,463 679 684 702 702 W g,479 563 588 684 684 W g,493 457 471 582 586 W g,507 465 467 519 536 W r,521 522 522 558 577 W r,537 488 516 548 551 W g,551 475 499 516 530 W g,565 499 502 514 528 W r,579 495 507 530 570 W r,595 341 352 542 542 W g`;
  const b = `27 168 213 348 367 W g,41 145 186 228 243 W g,55 88 156 177 193 W g,71 155 156 239 275 W r,85 220 262 312 322 W r,99 280 341 368 372 W g,113 332 346 353 386 W g,129 306 328 342 353 W g,143 337 341 392 396 Y r,157 384 384 449 449 Y r,171 385 427 443 443 Y g,185 385 427 443 443 Y r,201 361 361 443 466 W g,215 313 328 342 374 W g,229 305 323 330 342 W r,243 280 322 361 366 W r,259 335 347 368 368 W g,273 351 353 369 391 Y r,287 323 352 354 374 W g,301 316 328 349 374 W g`;
  [[a, 2508], [b, 3090]].forEach(([d, dx]) => d.split(',').forEach(k => {
    const [x, h, t, bo, l, col, w] = k.split(' ').map((v, i) => i < 5 ? +v : v);
    s += candle(x + dx, h + 720, t + 720, bo + 720, l + 720, col, w, 11.5); }));
  s += line('18,627 60,640 120,661 190,681 215,685 300,688 345,692 400,697 460,699 480,693 510,678 560,657 582,648 597,637 622,602 642,580 662,566 692,549 712,536 737,528 767,522 797,508 825,494 852,484 883,472', 2508, 720, 1.4);
  s += seg(2526, 1006, 3546, 1006, '#7f7c4d') + seg(2526, 1006, 3546, 1006, '#dccf58', 1, '5 4');
  s += `<rect x="3018" y="989" width="34" height="34" rx="8" fill="#232b3c" stroke="#3a5fc4" stroke-width="1.600" vector-effect="non-scaling-stroke"/>` + seg(3029, 1006, 3041, 1006, '#5c6a8c');
  s += line('36,405 60,408 75,415 90,425 107,427 133,447 147,431 162,431 177,447 192,450 249,318 279,298 291,292 307,331 321,352 336,336 351,357 378,384 393,364 408,368 423,336 438,346 465,328 480,300 495,220 510,178 525,235 540,273 552,253 567,246 597,274 612,211 627,184 655,176 669,235 684,277 699,294 713,297 726,291 741,325 757,352 772,345 786,349 798,313 813,302 827,302 845,321 858,316 874,327 887,321 904,307', 2490, 240, 2);
  s += seg(3333, 384, 3333, 1584, '#7b7f87', 1.6, '4 4');
  put('c3', s);
}

// ---- Axis labels: [text, y] in pixels from the top of the axis ----
function axis(id, divider, labels, tags) {
  let s = labels.map(([t, y]) => `<text x="9" y="${y + 4}">${t}</text>`).join('') + `<path d="M-1 ${divider}.500H60" stroke="#454a53"/>`;
  tags.forEach(([t, y, white]) => s += `<rect x="${white ? -1 : 0}" y="${y - (white ? 9 : 11)}" width="38" height="${white ? 18 : 22}" fill="${white ? '#fff' : '#363b43'}"/><text x="9" y="${y + 4}" font-weight="600" fill="${white ? '#22262e' : '#f4f5f7'}">${t}</text>`);
  document.querySelector('#' + id + ' .axis').innerHTML = s;
}
axis('c1', 114, [['60.00',30],['40.00',78],['2.60',128],['2.50',166],['2.40',204],['2.30',241],['2.20',279],['2.10',317],['2.00',355],['1.90',393]], [['2.38',212,1],['2.52',158,0]]);
axis('c2', 114, [['60.00',34],['40.00',85],['2.56',137],['2.50',169],['2.46',202],['2.40',234],['2.36',267],['2.30',299],['2.26',332],['2.20',364],['2.16',397]], [['2.38',248,1],['2.52',156,0]]);
axis('c3', 112, [['80.00',18],['60.00',53],['40.00',88],['3.00',158],['2.00',260],['1.50',312],['1.00',363]], [['2.38',222,1],['2.52',207,0]]);

// ---- Time labels: [text, x, highlighted box x and width] ----
function times(id, rows, extra = '') {
  document.querySelector('#' + id + ' .times').innerHTML = rows.map(([t, x, bx, bw]) =>
    (bw ? `<rect x="${bx}" y="0" width="${bw}" height="23" fill="#363b43"/>` : '') + t.split('|').map((u, i) => `<text x="${x + i * 68}" y="17" ${bw ? 'font-weight="600" fill="#f4f5f7"' : ''}>${u}</text>`).join('')).join('') + extra;
}
times('c1', [['ส.ค.',8],["06 ก.ย. '21",125,117,73],['ต.ค.',242]], '<path d="M342.500 0v28" stroke="#3c4149"/>');
times('c2', [["06 ก.ย. '21|09:00",9,1,114],['15:00',165],['ต.ค.',247]], '<path d="M342.500 0v28" stroke="#3c4149"/>');
times('c3', [['ก.ย.',6],['2021',85],['พ.ค.',170],["06 ก.ย. '21",239,231,73]], '<path d="M339.500 0v28" stroke="#3c4149"/><svg x="350" y="0" width="28" height="28" fill="none" stroke="#8d9199" stroke-width="1.200"><use href="#sun"/></svg>');
</script>
</body>
</html>
